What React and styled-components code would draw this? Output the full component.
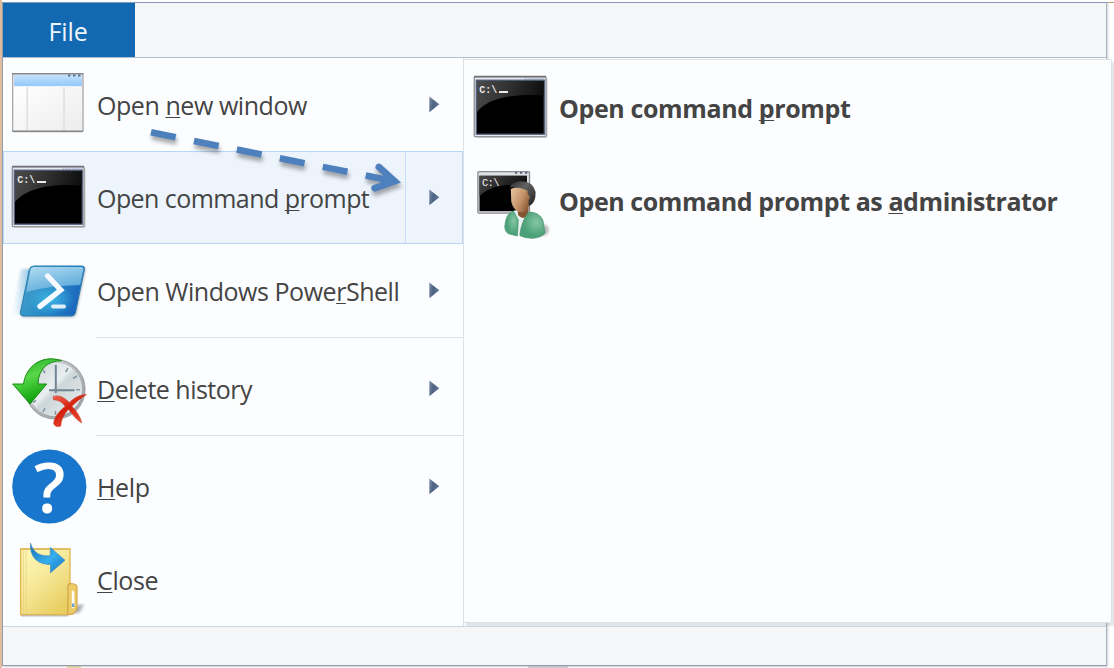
import React from "react";
import styled, { createGlobalStyle, css } from "styled-components";

const GlobalStyle = createGlobalStyle`
  * { box-sizing: border-box; }
  body {
    margin: 0;
    background: #fff;
    overflow: hidden;
    font-family: "Open Sans", "Noto Sans", sans-serif;
  }
`;

const Page = styled.div`
  position: relative;
  width: 1114px;
  height: 668px;
  padding-top: 2px;
  overflow: hidden;
  background:
    linear-gradient(#efe6ae, #efe6ae) 67px 666px / 14px 2px no-repeat,
    linear-gradient(#d9dade, #d9dade) 528px 666px / 40px 2px no-repeat,
    linear-gradient(to right, #e0bd9f 0 2px, #fff 2px);
`;

const TopEdge = styled.div`
  position: absolute;
  top: 2px;
  right: 0;
  width: 7px;
  height: 1px;
  background: #c6996f;
`;

const Window = styled.div`
  display: flex;
  flex-direction: column;
  width: 1105px;
  height: 664px;
  margin-left: 2px;
  border: 1px solid #949cae;
  border-top-color: #8499b3;
  border-right-color: #a9b4c6;
  background: #f5f6f8;
  box-shadow: 1px 1px 2px rgba(90, 95, 120, 0.3);
`;

const TabBar = styled.div`
  height: 55px;
  display: flex;
  border-bottom: 1px solid #b4bfcd;
`;

const FileTab = styled.div`
  width: 132px;
  height: 54px;
  padding: 2px 2px 0 0;
  display: flex;
  align-items: center;
  justify-content: center;
  background: #1368b2;
  color: #eef5fb;
  font-size: 25px;
  line-height: 34px;
  letter-spacing: -0.1px;
`;

const Body = styled.div`
  height: 569px;
  border-bottom: 1px solid #c6d7e9;
  background: #fbfcfe;
`;

const Menu = styled.div`
  width: 461px;
  height: 568px;
  border-right: 1px solid #dcdee1;
  background: #fcfdff;
`;

const Row = styled.div`
  display: flex;
  align-items: center;
  width: 460px;
  height: 93px;
  padding-left: 5px;
  ${(p) =>
    p.$active &&
    css`
      background: #edf4fc;
      box-shadow: inset 0 0 0 1px #b5d7fa;
    `}
`;

const IconCell = styled.div`
  width: 89px;
  height: 93px;
  flex: none;
  svg { display: block; }
`;

const Label = styled.span`
  flex: 1;
  padding-top: 1px;
  color: #444;
  font-size: 25px;
  line-height: 34px;
  white-space: nowrap;
  font-weight: ${(p) => (p.$bold ? 700 : 400)};
  letter-spacing: ${(p) => p.$track || 0}px;
`;

const Key = styled.span`
  text-decoration: underline;
  text-decoration-thickness: 1px;
  text-underline-offset: 2px;
  text-decoration-skip-ink: none;
`;

const Expand = styled.div`
  width: 58px;
  height: 93px;
  flex: none;
  padding-left: 23px;
  display: flex;
  align-items: center;
  border-left: 1px solid ${(p) => (p.$active ? "#c3dff9" : "transparent")};
`;

const Separator = styled.div`
  height: 5px;
  margin-left: 93px;
  border-top: 1px solid #dcdfe3;
`;

const SubMenu = styled.div`
  position: absolute;
  left: 463px;
  top: 59px;
  width: 649px;
  height: 564px;
  padding: 1px 0 0 1px;
  border: 1px solid #dfe1e4;
  border-radius: 2px;
  background: #fcfdff;
  box-shadow: 3px 3px 1px rgba(120, 120, 120, 0.18);
`;

const Pointer = styled.svg`
  position: absolute;
  left: 140px;
  top: 120px;
`;

const PointerStrokes = styled.g`
  fill: none;
  stroke: #4d80bd;
  filter: drop-shadow(1px 4px 2px rgba(0, 0, 0, 0.35));
`;

function Art({ children }) {
  return (
    <svg width="89" height="93" viewBox="0 0 89 93">
      {children}
    </svg>
  );
}

function WindowIcon() {
  return (
    <Art>
      <defs>
        <linearGradient id="wTitle" x2="0" y2="1">
          <stop offset="0" stopColor="#c3e1fc" />
          <stop offset="1" stopColor="#94c8fb" />
        </linearGradient>
        <linearGradient id="wPane" x2="1" y2="1">
          <stop offset="0" stopColor="#fff" />
          <stop offset="1" stopColor="#ececed" />
        </linearGradient>
      </defs>
      <rect x="4.7" y="15.7" width="70.3" height="57.8" rx="1" fill="#fff" stroke="#a5a5a6" strokeWidth="1.3" />
      <path d="M4 15.8H75.5M4.5 73.2H75" stroke="#858789" strokeWidth="1.6" />
      <rect x="6" y="17" width="68" height="11.3" fill="url(#wTitle)" />
      <rect x="6" y="28.5" width="68" height="43.3" fill="url(#wPane)" />
      <path d="M19.2 29V72M56 29V72" stroke="#dedfe0" strokeWidth="1.6" />
      <path d="M60 17.5h2.4M65 17.5h2.4M70 17.5h2.4" stroke="#5e7185" strokeWidth="2" />
    </Art>
  );
}

function ConsoleIcon({ id }) {
  return (
    <Art>
      <defs>
        <linearGradient id={id} x2="1" y2="0.15">
          <stop offset="0" stopColor="#4c4c4c" />
          <stop offset="0.5" stopColor="#303030" />
          <stop offset="1" stopColor="#101010" />
        </linearGradient>
      </defs>
      <rect x="5.5" y="17" width="72" height="60" rx="1.5" fill="#cfd0d2" />
      <rect x="4.3" y="15.6" width="71.7" height="60" rx="1.2" fill="#e8eaf0" stroke="#949699" strokeWidth="1.4" />
      <path d="M4 15.6H76" stroke="#707276" strokeWidth="1.6" />
      <path d="M54.5 18H74" stroke="#a9b5c9" strokeWidth="1.4" strokeDasharray="2 1" />
      <rect x="6.3" y="19.2" width="68" height="54" fill="#000" stroke="#53617f" strokeWidth="1.3" />
      <path d="M7 20H73.6V34.5C44 32 18 37 7 51Z" fill={`url(#${id})`} />
      <text x="9.3" y="31.5" fontFamily="Liberation Mono, monospace" fontWeight="700" fontSize="10" letterSpacing="0" fill="#e6e6e6">C:\</text>
      <path d="M29 31h9" stroke="#fff" strokeWidth="1.8" />
    </Art>
  );
}

function AdminIcon() {
  return (
    <Art>
      <defs>
        <linearGradient id="aGloss" x2="1" y2="0.4">
          <stop offset="0" stopColor="#494949" />
          <stop offset="1" stopColor="#0c0c0c" />
        </linearGradient>
        <linearGradient id="aFace" x2="1" y2="0.6">
          <stop offset="0" stopColor="#e6c6a2" />
          <stop offset="0.6" stopColor="#c4946a" />
          <stop offset="1" stopColor="#8f5d3a" />
        </linearGradient>
        <linearGradient id="aHair" x2="1" y2="1">
          <stop offset="0" stopColor="#2b2b2b" />
          <stop offset="0.4" stopColor="#626262" />
          <stop offset="1" stopColor="#1e1e1e" />
        </linearGradient>
        <radialGradient id="aCoat" cx="0.65" cy="0.4">
          <stop offset="0" stopColor="#83c6a3" />
          <stop offset="1" stopColor="#4da179" />
        </radialGradient>
        <filter id="aSoft"><feGaussianBlur stdDeviation="1.2" /></filter>
      </defs>
      <rect x="7.9" y="17.6" width="51.6" height="41.5" rx="1" fill="#dfe1e5" stroke="#888a90" strokeWidth="1.3" />
      <path d="M45 18.9h2.2M50 18.9h2.2M55 18.9h2.2" stroke="#526078" strokeWidth="1.6" />
      <rect x="9.5" y="21.8" width="47.5" height="35.4" fill="#000" />
      <path d="M9.5 21.8H57V33C36 28 19 33 9.5 42Z" fill="url(#aGloss)" />
      <text x="12" y="32.4" fontFamily="Liberation Mono, monospace" fontWeight="400" fontSize="10.5" letterSpacing="-0.7" fill="#eee">C:\</text>
      <ellipse cx="72" cy="76" rx="7" ry="6" fill="#888" opacity="0.55" filter="url(#aSoft)" />
      <path d="M43 57Q51 54 59 57L64 63 51 83 43 69Z" fill="#eaf3f4" />
      <path d="M47.5 54H58.5V61Q53 67 48 61Z" fill="#865431" />
      <path d="M43.5 57Q36 59 34.8 72Q34.6 78 39 80L47.5 82L48.3 66Z" fill="url(#aCoat)" stroke="#4b9975" strokeWidth="0.7" />
      <path d="M58.5 58Q69 58 72.8 66L75 79Q71 84 62 84.3Q54 84 49.8 81.5Q51 68 58.5 58Z" fill="url(#aCoat)" stroke="#438f6a" strokeWidth="0.7" />
      <path d="M40.8 35Q48 31 60 35L59.6 50Q58 58.5 51 58.5Q43.5 57 41.3 48Z" fill="url(#aFace)" />
      <path d="M39.5 33.5Q42 27.5 51 27.3Q63 27 65.6 38Q66 49 59.2 52Q57.5 47 60 43Q57 40 57.2 36.2Q48 32.5 39.5 33.5Z" fill="url(#aHair)" />
    </Art>
  );
}

function PowerShellIcon() {
  const shape = "M26 22H73.5Q77.2 22 76.4 25.5L67.4 68.8Q66.6 72 63.3 72H15.7Q11.6 72 12.4 68.2L21.4 25.5Q22.3 22 26 22Z";
  return (
    <Art>
      <defs>
        <linearGradient id="psBase" x1="0.1" x2="1" y1="0.5" y2="0.8">
          <stop offset="0" stopColor="#3d99c8" />
          <stop offset="0.4" stopColor="#2789c7" />
          <stop offset="1" stopColor="#195ebb" />
        </linearGradient>
        <linearGradient id="psTop" x2="0.5" y2="1">
          <stop offset="0" stopColor="#b2ddf2" />
          <stop offset="1" stopColor="#5caada" />
        </linearGradient>
        <radialGradient id="psGlow">
          <stop offset="0" stopColor="#43c4ef" stopOpacity="0.75" />
          <stop offset="1" stopColor="#43c4ef" stopOpacity="0" />
        </radialGradient>
        <linearGradient id="psTrail">
          <stop offset="0" stopColor="#9acfe8" stopOpacity="0" />
          <stop offset="1" stopColor="#5ea9d0" />
        </linearGradient>
        <filter id="psSoft"><feGaussianBlur stdDeviation="0.9" /></filter>
      </defs>
      <path d="M13 25H25L16 70H4L7 57H6L10 42H9Z" fill="url(#psTrail)" opacity="0.85" filter="url(#psSoft)" />
      <path d={shape} fill="#666" opacity="0.4" transform="translate(1 1.5)" filter="url(#psSoft)" />
      <path d={shape} fill="url(#psBase)" stroke="#2a7faf" strokeWidth="1" />
      <ellipse cx="43" cy="56" rx="24" ry="15" fill="url(#psGlow)" />
      <path d="M26 23H73.5Q76 23 75.4 25.5L72.2 41Q42 41.5 18.3 48L22.5 25.5Q23 23 26 23Z" fill="url(#psTop)" />
      <path d="M39.7 32L52.7 46 32 62.3" fill="none" stroke="#f4faff" strokeWidth="5.4" strokeLinecap="round" strokeLinejoin="miter" />
      <path d="M45 62.4H56" stroke="#dff0fb" strokeWidth="4" strokeLinecap="round" />
    </Art>
  );
}

function HistoryIcon() {
  return (
    <Art>
      <defs>
        <linearGradient id="hFace" x2="1" y2="1">
          <stop offset="0" stopColor="#c4cdd0" />
          <stop offset="0.45" stopColor="#e9eef0" />
          <stop offset="0.52" stopColor="#cdd6d8" />
          <stop offset="1" stopColor="#f1f4f5" />
        </linearGradient>
        <linearGradient id="hRim" x2="1" y2="1">
          <stop offset="0" stopColor="#e2e4e5" />
          <stop offset="1" stopColor="#888d90" />
        </linearGradient>
        <linearGradient id="hGreen" x2="0.4" y2="1">
          <stop offset="0" stopColor="#1d9e19" />
          <stop offset="0.45" stopColor="#58d84a" />
          <stop offset="1" stopColor="#069b05" />
        </linearGradient>
        <linearGradient id="hRed" x2="0.6" y2="1">
          <stop offset="0" stopColor="#f06a55" />
          <stop offset="0.5" stopColor="#d41f0c" />
          <stop offset="1" stopColor="#ec5039" />
        </linearGradient>
      </defs>
      <circle cx="47.3" cy="47.3" r="29.5" fill="url(#hFace)" stroke="#a0a4a6" strokeWidth="1.6" />
      <circle cx="47.3" cy="47.3" r="27.8" fill="none" stroke="url(#hRim)" strokeWidth="1.8" />
      <path d="M60 26l-2.3 4M69 34l-4 2.5M72 47.8h-4M37 66l-2 4M28 58.5l-3 2M35 28l2 3M47.5 69v4" stroke="#8598a6" strokeWidth="1.6" />
      <path d="M47.8 23V51M41 48.2H66.5" stroke="#718493" strokeWidth="2" />
      <path d="M15.5 42C17.5 27 29 16.5 44 16.8Q49 17 53.5 18.7C39 19 30.5 27 30 42H38.7L22 62 4.7 42Z" fill="url(#hGreen)" stroke="#168c16" strokeWidth="1" />
      <path d="M45.3 54.5C51.5 52.5 57 56 61.3 60.5C66 56 71 53 78.4 52.5C72.5 56.5 68 60 63.9 64.3C68.8 69.5 72 74 73.7 80.7C70 79.5 65 73 60.4 67.3C55.5 73 53 78 52.8 84Q47 86 45.7 81.3C46 76 51 69 57.2 64.5C54.5 60 50.5 58 45.5 57.8Z" fill="url(#hRed)" stroke="#c93725" strokeWidth="0.6" />
    </Art>
  );
}

function HelpIcon() {
  return (
    <Art>
      <circle cx="41.3" cy="46.5" r="37.1" fill="#1877cc" />
      <text x="41.7" y="72.8" textAnchor="middle" fontFamily="Open Sans, sans-serif" fontWeight="600" fontSize="69" fill="#fff">?</text>
    </Art>
  );
}

function CloseIcon() {
  return (
    <Art>
      <defs>
        <linearGradient id="cBody" x2="0.7" y2="1">
          <stop offset="0" stopColor="#fdf8b9" />
          <stop offset="0.45" stopColor="#f8eb9f" />
          <stop offset="1" stopColor="#e8cf62" />
        </linearGradient>
        <linearGradient id="cArrow" x2="1" y2="1">
          <stop offset="0" stopColor="#1a6dae" />
          <stop offset="0.55" stopColor="#35aff0" />
          <stop offset="1" stopColor="#1671b8" />
        </linearGradient>
        <filter id="cSoft"><feGaussianBlur stdDeviation="1.4" /></filter>
      </defs>
      <path d="M66 73L76 71 72 79 66 81Z" fill="#777" opacity="0.6" filter="url(#cSoft)" />
      <path d="M13 82.8H60" stroke="#777" opacity="0.45" strokeWidth="1.5" />
      <rect x="12.6" y="15.7" width="49.4" height="65.9" fill="url(#cBody)" stroke="#dfb552" strokeWidth="1.3" />
      <path d="M12.5 16H62" stroke="#e3bd61" strokeWidth="2" />
      <path d="M15.3 17V81M18 17V81" stroke="#e8cc76" strokeWidth="0.7" />
      <path d="M60 53Q60 50.5 63 50.5Q69 51 69 54V76L65 81.3H59.8Z" fill="#edcb67" stroke="#d0a345" strokeWidth="1.1" />
      <path d="M63.8 57.5Q66.3 57.5 66.3 60V74L63.8 75.5Z" fill="#fff" />
      <rect x="63.8" y="70.5" width="2.5" height="3.5" fill="#64a4d5" />
      <path d="M22.5 10.2C25 19 31.5 23.8 42.3 22.7V14.5L57 27.3 42.5 39.8V31.5C30 31.5 21.5 24.5 22.5 10.2Z" fill="url(#cArrow)" stroke="#3f90c4" strokeWidth="0.7" />
    </Art>
  );
}

function Chevron() {
  return (
    <svg width="11" height="17" viewBox="0 0 11 17">
      <defs>
        <linearGradient id="chev" x2="1" y2="0.3">
          <stop offset="0" stopColor="#7c8ea8" />
          <stop offset="0.5" stopColor="#4e6382" />
          <stop offset="1" stopColor="#5e7798" />
        </linearGradient>
      </defs>
      <path d="M0.3 0.5L10.3 8.3 0.3 16.2Z" fill="url(#chev)" />
    </svg>
  );
}

function MenuItem({ icon, active, expandable = true, track, bold, children }) {
  return (
    <Row $active={active}>
      <IconCell>{icon}</IconCell>
      <Label $track={track} $bold={bold}>{children}</Label>
      {expandable && (
        <Expand $active={active}>
          <Chevron />
        </Expand>
      )}
    </Row>
  );
}

export default function App() {
  return (
    <Page>
      <GlobalStyle />
      <TopEdge />
      <Window>
        <TabBar>
          <FileTab>File</FileTab>
        </TabBar>
        <Body>
          <Menu>
            <MenuItem icon={<WindowIcon />} track={-0.44}>Open <Key>n</Key>ew window</MenuItem>
            <MenuItem icon={<ConsoleIcon id="con1" />} active track={-0.56}>Open command <Key>p</Key>rompt</MenuItem>
            <MenuItem icon={<PowerShellIcon />} track={-0.46}>Open Windows Powe<Key>r</Key>Shell</MenuItem>
            <Separator />
            <MenuItem icon={<HistoryIcon />} track={-0.52}><Key>D</Key>elete history</MenuItem>
            <Separator />
            <MenuItem icon={<HelpIcon />} track={-0.35}><Key>H</Key>elp</MenuItem>
            <MenuItem icon={<CloseIcon />} track={-0.35} expandable={false}><Key>C</Key>lose</MenuItem>
          </Menu>
        </Body>
      </Window>
      <SubMenu>
        <MenuItem icon={<ConsoleIcon id="con2" />} bold track={-0.38} expandable={false}>Open command <Key>p</Key>rompt</MenuItem>
        <MenuItem icon={<AdminIcon />} bold track={-0.42} expandable={false}>Open command prompt as <Key>a</Key>dministrator</MenuItem>
      </SubMenu>
      <Pointer width="275" height="90" viewBox="140 120 275 90">
        <PointerStrokes>
          <path d="M151 132.3L394 181.2" strokeWidth="6.6" strokeDasharray="25.2 18.6" />
          <path d="M378.9 167L394.5 181.2L374.6 188.2" strokeWidth="6.8" strokeLinecap="round" strokeLinejoin="miter" />
        </PointerStrokes>
      </Pointer>
    </Page>
  );
}
